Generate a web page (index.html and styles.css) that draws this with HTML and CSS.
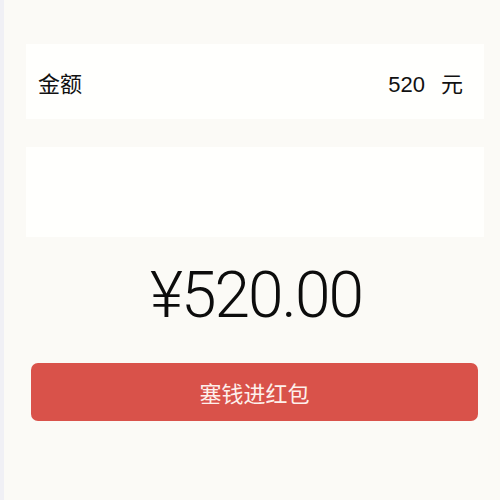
FILE: index.html
```html
<!DOCTYPE html>
<html lang="zh-CN">
<head>
    <meta charset="UTF-8">
    <meta name="viewport" content="width=device-width, initial-scale=1.0">
    <title>发红包</title>
    <link rel="stylesheet" href="styles.css">
</head>
<body>
    <div class="page">
        <div class="card amount-row">
            <span class="label">金额</span>
            <span class="value">520<span class="unit">元</span></span>
        </div>

        <div class="card message"></div>

        <div class="total">¥520.00</div>

        <button type="button" class="send-btn">塞钱进红包</button>
    </div>
</body>
</html>
```

FILE: styles.css
```css
body {
    margin: 0;
    background-color: #fbfaf6;
    font-family: "Liberation Sans", "Noto Sans CJK SC", sans-serif;
    color: #111;
}
.page {
    min-height: 500px;
    border-left: 4px solid #f0f0f5;
    padding-top: 44px;
    box-sizing: border-box;
}
.card {
    background: #fffffd;
    margin: 0 16px 0 22px;
}
.amount-row {
    height: 75px;
    display: flex;
    align-items: center;
    justify-content: space-between;
    padding: 0 21px 0 12px;
    font-size: 22px;
}
.unit {
    margin-left: 16px;
}
.message {
    height: 90px;
    margin-top: 28px;
}
.total {
    margin-top: 27px;
    padding-left: 8px;
    font-family: Roboto, "Liberation Sans", sans-serif;
    font-weight: 300;
    font-size: 64px;
    line-height: 64px;
    letter-spacing: -2px;
    text-align: center;
    color: #0c0c0c;
}
.send-btn {
    display: block;
    width: calc(100% - 49px);
    height: 58px;
    margin: 35px 0 0 27px;
    background-color: #d9524a;
    color: #fdf0ec;
    border: none;
    border-radius: 7px;
    font-family: "Noto Sans CJK SC", sans-serif;
    font-size: 22px;
    cursor: pointer;
}
```
